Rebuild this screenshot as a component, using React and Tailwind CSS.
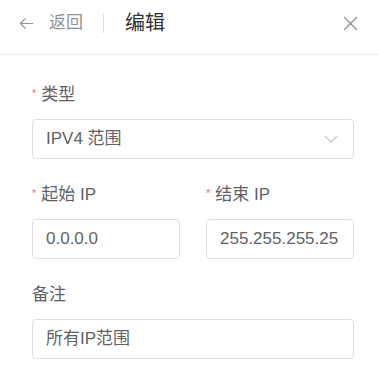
import React from 'react'

const font = { fontFamily: '"Liberation Sans", "Noto Sans CJK SC", sans-serif' }

const Label = ({ children, required }) => (
  <div className="h-6 flex items-center text-[17px] leading-6 text-[#606266] mb-3">
    {required && <span className="text-[#f56c6c] text-[11px] leading-none self-start mt-[5px] mr-[5px]">*</span>}
    {children}
  </div>
)

const Field = ({ value }) => (
  <div className="h-10 px-[13px] flex items-center border border-[#dcdfe6] rounded-[4px] bg-white">
    <div className="overflow-hidden whitespace-nowrap text-[17px] text-[#606266]">{value}</div>
  </div>
)

export default function App() {
  return (
    <div className="w-[379px] h-[382px] bg-white overflow-hidden" style={font}>
      <div className="h-[55px] border-b border-[#ebeef5]">
        <div className="h-[46px] flex items-center pl-[19px] pr-[21px]">
          <svg width="15" height="15" viewBox="0 0 16 16" fill="none" stroke="#909399" strokeWidth="1.3">
            <path d="M15 8H1.5M7 2.5L1.5 8L7 13.5" />
          </svg>
          <span className="ml-[15px] text-[17px] text-[#909399]">返回</span>
          <span className="ml-[20px] w-px h-5 bg-[#dcdfe6]" />
          <span className="ml-[21px] text-[20px] text-[#303133]">编辑</span>
          <svg className="ml-auto" width="15" height="15" viewBox="0 0 15 15" fill="none" stroke="#909399" strokeWidth="1.4">
            <path d="M1 1L14 14M14 1L1 14" />
          </svg>
        </div>
      </div>

      <div className="pt-7 pl-8 pr-[25px]">
        <div className="mb-6">
          <Label required>类型</Label>
          <div className="relative h-10 border border-[#dcdfe6] rounded-[4px] flex items-center px-[13px] text-[17px] text-[#606266]">
            IPV4 范围
            <svg className="absolute right-[15px] top-[15px]" width="14" height="8" viewBox="0 0 14 8" fill="none" stroke="#c0c4cc" strokeWidth="1.1">
              <path d="M1 1L7 7L13 1" />
            </svg>
          </div>
        </div>

        <div className="grid grid-cols-2 gap-x-[26px] mb-6">
          <div>
            <Label required>起始 IP</Label>
            <Field value="0.0.0.0" />
          </div>
          <div>
            <Label required>结束 IP</Label>
            <Field value="255.255.255.25" />
          </div>
        </div>

        <div>
          <Label>备注</Label>
          <Field value="所有IP范围" />
        </div>
      </div>
    </div>
  )
}
